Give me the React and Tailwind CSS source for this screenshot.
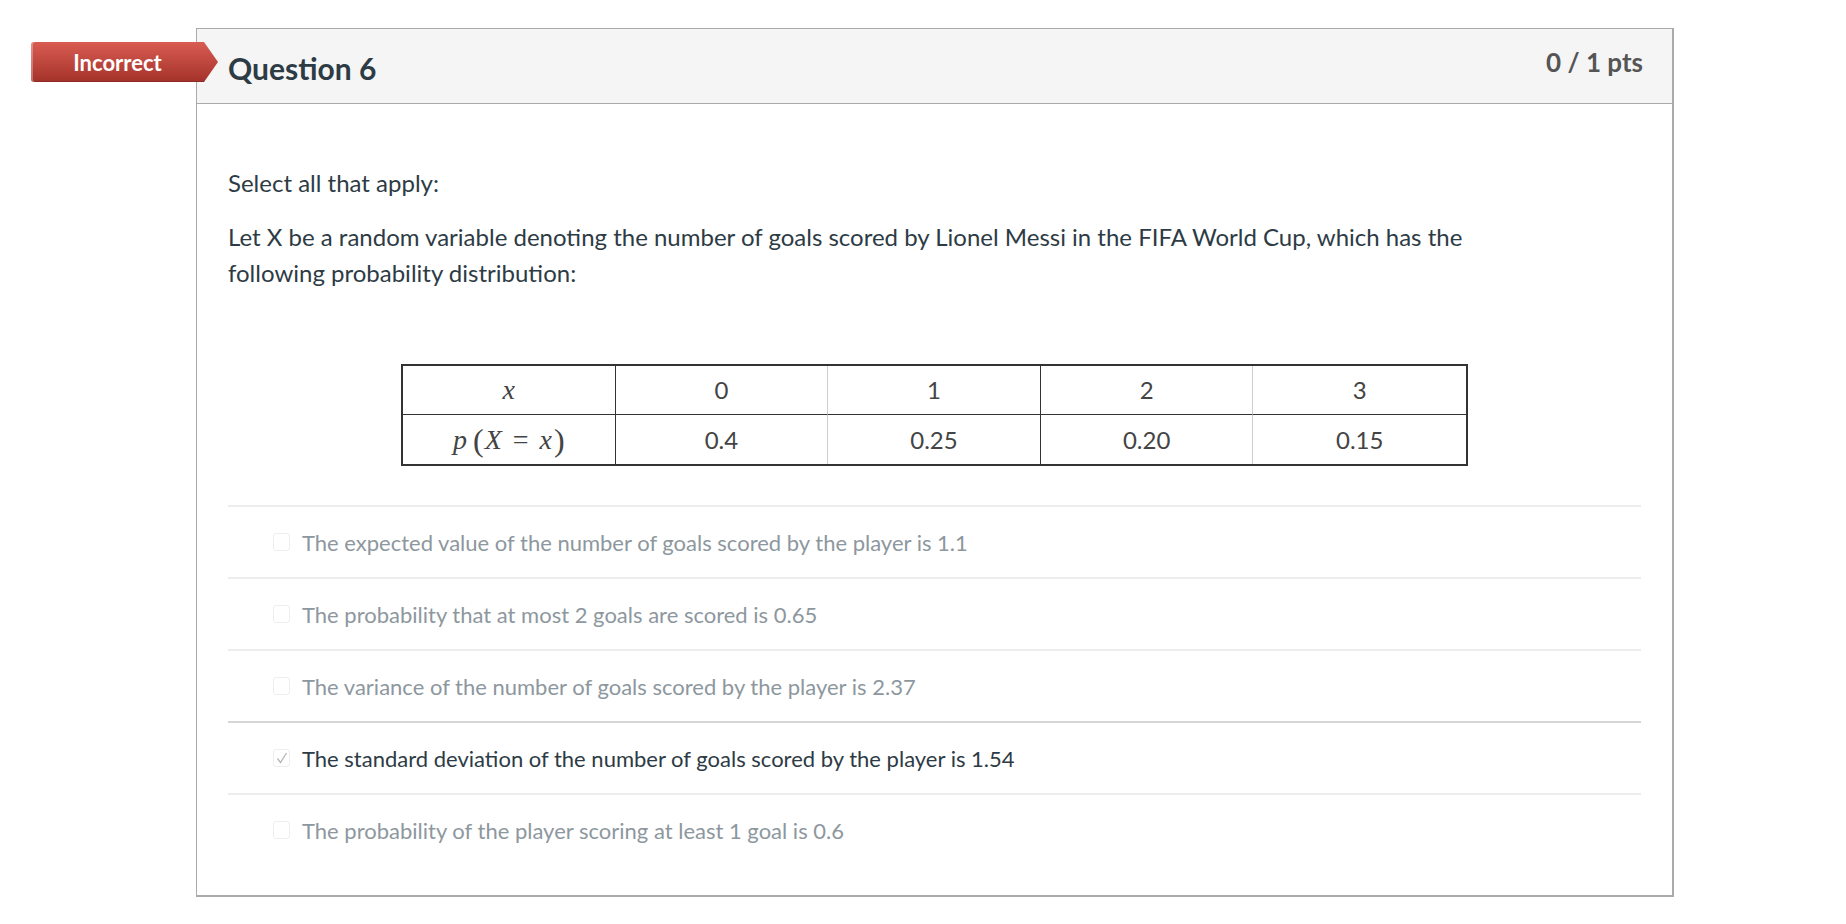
import React from 'react';

const answers = [
  { text: 'The expected value of the number of goals scored by the player is 1.1', selected: false },
  { text: 'The probability that at most 2 goals are scored is 0.65', selected: false },
  { text: 'The variance of the number of goals scored by the player is 2.37', selected: false },
  { text: 'The standard deviation of the number of goals scored by the player is 1.54', selected: true },
  { text: 'The probability of the player scoring at least 1 goal is 0.6', selected: false },
];

const values = [
  ['0', '0.4'],
  ['1', '0.25'],
  ['2', '0.20'],
  ['3', '0.15'],
];

function MathX() {
  return <span className="font-['Liberation_Serif',serif] italic text-[28px]">x</span>;
}

function MathPx() {
  return (
    <span className="font-['Liberation_Serif',serif] text-[28px] flex items-center">
      <span className="italic">p</span>
      <span className="text-[32px] ml-[6px] font-light">(</span>
      <span className="italic ml-[1px]">X</span>
      <span className="mx-[11px]">=</span>
      <span className="italic">x</span>
      <span className="text-[32px] ml-[2px] font-light">)</span>
    </span>
  );
}

function Checkbox({ checked }) {
  return (
    <span className="w-[17px] h-[18px] shrink-0 rounded-[3px] border border-[#eeeeee] bg-white flex items-center justify-center">
      {checked && (
        <svg width="12" height="12" viewBox="0 0 12 12" fill="none">
          <path d="M1.5 6.5 L4.5 10.5 L10.5 1" stroke="#b5b5b5" strokeWidth="1.3" />
        </svg>
      )}
    </span>
  );
}

export default function App() {
  return (
    <div className="min-h-screen bg-white pt-[28px] font-['Lato','Open_Sans',sans-serif] text-[#2d3b45]">
      <div className="relative ml-[196px] w-[1478px]">
        <div className="absolute left-[-165px] top-[14px] z-10 flex h-[40px] w-[187px] items-center justify-center pr-[14px] rounded-l-[3px] bg-linear-to-b from-[#d95c52] to-[#a4322a] text-[22px] font-bold text-white shadow-[inset_2px_0_0_rgba(255,255,255,0.3),inset_0_-1px_0_rgba(0,0,0,0.15)] [clip-path:polygon(0_0,calc(100%_-_14px)_0,100%_50%,calc(100%_-_14px)_100%,0_100%)]">
          Incorrect
        </div>

        <div className="border-t border-l border-r-2 border-b-2 border-[#aaaaaa]">
          <div className="flex h-[75px] items-start justify-between border-b border-[#aaaaaa] bg-[#f5f5f5] pl-[31px] pr-[29px] pt-[24px]">
            <span className="text-[30px] font-bold leading-[30px]">Question 6</span>
            <span className="mt-[-4px] text-[26px] font-bold leading-[26px] text-[#555555]">0 / 1 pts</span>
          </div>

          <div className="px-[31px] pt-[61px] pb-[30px]">
            <p className="mb-[18px] text-[24px] leading-[36px]">Select all that apply:</p>
            <p className="max-w-[1290px] text-[24px] leading-[36px]">
              Let X be a random variable denoting the number of goals scored by Lionel Messi in the FIFA World Cup, which has the following probability distribution:
            </p>

            <div className="mx-auto mt-[73px] mb-[39px] grid w-[1067px] grid-cols-5 border-2 border-[#333333] text-[24px] text-[#444444]">
              <div className="flex h-[49px] items-center justify-center border-r border-b border-[#333333]">
                <MathX />
              </div>
              {values.map(([x], i) => (
                <div
                  key={'h' + x}
                  className={
                    'flex h-[49px] items-center justify-center border-b border-b-[#333333] ' +
                    (i === 3 ? '' : i % 2 === 0 ? 'border-r border-r-[#cccccc]' : 'border-r border-r-[#333333]')
                  }
                >
                  {x}
                </div>
              ))}
              <div className="flex h-[49px] items-center justify-center border-r border-[#333333]">
                <MathPx />
              </div>
              {values.map(([x, p], i) => (
                <div
                  key={'p' + x}
                  className={
                    'flex h-[49px] items-center justify-center ' +
                    (i === 3 ? '' : i % 2 === 0 ? 'border-r border-r-[#cccccc]' : 'border-r border-r-[#333333]')
                  }
                >
                  {p}
                </div>
              ))}
            </div>

            <div>
              {answers.map((a, i) => (
                <div
                  key={i}
                  className={
                    'flex h-[72px] items-center gap-[12px] border-t-2 pl-[45px] ' +
                    (i === 3 ? 'border-[#d6d6d6]' : 'border-[#ececec]')
                  }
                >
                  <Checkbox checked={a.selected} />
                  <span className={'text-[22px] ' + (a.selected ? 'text-[#2d3b45]' : 'text-[#8d979e]')}>{a.text}</span>
                </div>
              ))}
            </div>
          </div>
        </div>
      </div>
    </div>
  );
}
